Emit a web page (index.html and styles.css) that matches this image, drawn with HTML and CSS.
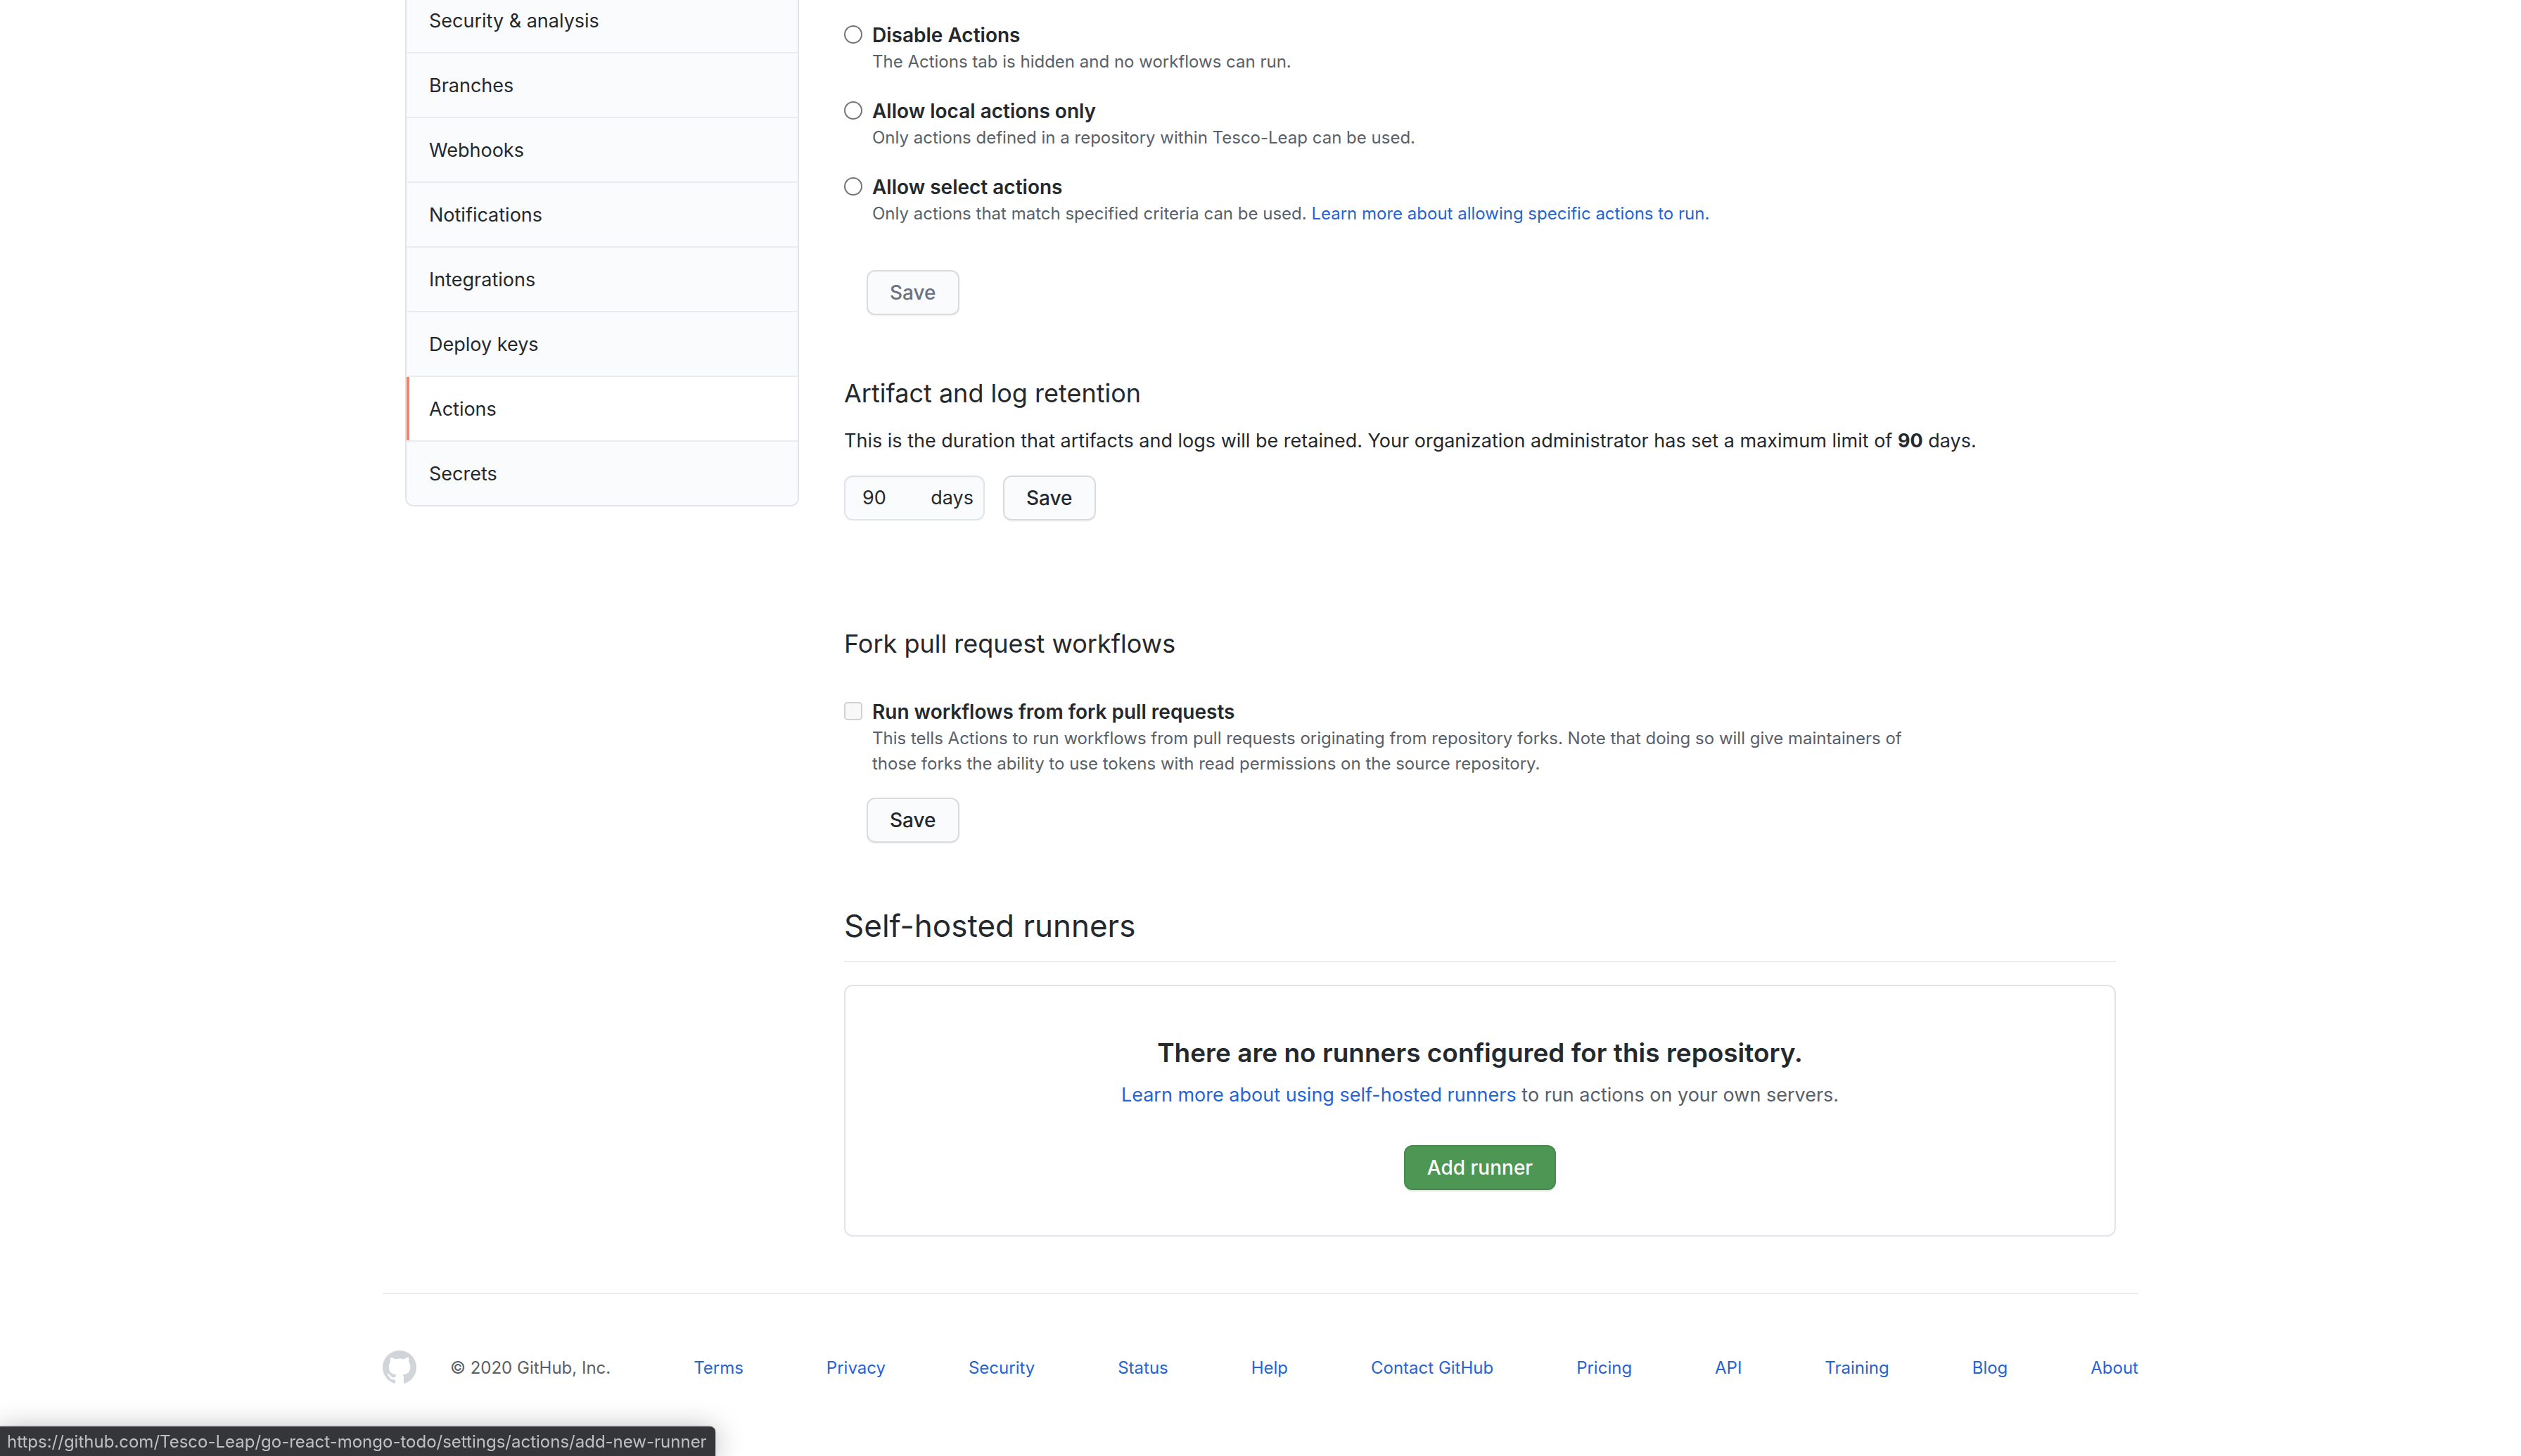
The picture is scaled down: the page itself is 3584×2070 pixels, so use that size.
FILE: index.html
```html
<!DOCTYPE html>
<html lang="en">
<head>
<meta charset="utf-8">
<title>Actions settings</title>
<link rel="stylesheet" href="styles.css">
</head>
<body>
<div class="layout">
  <nav class="menu" aria-label="Repository settings">
    <a class="menu-item" href="#security">Security &amp; analysis</a>
    <a class="menu-item" href="#branches">Branches</a>
    <a class="menu-item" href="#webhooks">Webhooks</a>
    <a class="menu-item" href="#notifications">Notifications</a>
    <a class="menu-item" href="#integrations">Integrations</a>
    <a class="menu-item" href="#keys">Deploy keys</a>
    <a class="menu-item selected" href="#actions" aria-current="page">Actions</a>
    <a class="menu-item" href="#secrets">Secrets</a>
  </nav>

  <main class="content">
    <form class="permissions">
      <div class="option">
        <input type="radio" name="policy" id="disable">
        <div>
          <label for="disable">Disable Actions</label>
          <p class="note">The Actions tab is hidden and no workflows can run.</p>
        </div>
      </div>
      <div class="option">
        <input type="radio" name="policy" id="local">
        <div>
          <label for="local">Allow local actions only</label>
          <p class="note">Only actions defined in a repository within Tesco-Leap can be used.</p>
        </div>
      </div>
      <div class="option">
        <input type="radio" name="policy" id="select">
        <div>
          <label for="select">Allow select actions</label>
          <p class="note">Only actions that match specified criteria can be used. <a href="#learn">Learn more about allowing specific actions to run.</a></p>
        </div>
      </div>
      <button class="btn indent" type="submit" disabled>Save</button>
    </form>

    <section class="retention">
      <h3>Artifact and log retention</h3>
      <p class="lead">This is the duration that artifacts and logs will be retained. Your organization administrator has set a maximum limit of <strong>90</strong> days.</p>
      <form class="retention-form">
        <div class="days-field">
          <input type="text" id="days" value="90">
          <label for="days">days</label>
        </div>
        <button class="btn" type="submit">Save</button>
      </form>
    </section>

    <section class="forks">
      <h3>Fork pull request workflows</h3>
      <form>
        <div class="option">
          <input type="checkbox" id="fork" disabled>
          <div>
            <label for="fork">Run workflows from fork pull requests</label>
            <p class="note">This tells Actions to run workflows from pull requests originating from repository forks. Note that doing so will give maintainers of those forks the ability to use tokens with read permissions on the source repository.</p>
          </div>
        </div>
        <button class="btn indent" type="submit">Save</button>
      </form>
    </section>

    <section class="runners">
      <h2>Self-hosted runners</h2>
      <div class="blankslate">
        <h3>There are no runners configured for this repository.</h3>
        <p><a href="#runners">Learn more about using self-hosted runners</a> to run actions on your own servers.</p>
        <button class="btn btn-primary" type="button">Add runner</button>
      </div>
    </section>
  </main>
</div>

<footer class="footer">
  <a class="mark" href="#home" aria-label="GitHub">
    <svg viewBox="0 0 16 16" width="48" height="48" aria-hidden="true"><path fill="currentColor" fill-rule="evenodd" d="M8 0C3.58 0 0 3.58 0 8c0 3.54 2.29 6.53 5.47 7.59.4.07.55-.17.55-.38 0-.19-.01-.82-.01-1.49-2.01.37-2.53-.49-2.69-.94-.09-.23-.48-.94-.82-1.13-.28-.15-.68-.52-.01-.53.63-.01 1.08.58 1.23.82.72 1.21 1.87.87 2.33.66.07-.52.28-.87.51-1.07-1.78-.2-3.64-.89-3.64-3.95 0-.87.31-1.59.82-2.15-.08-.2-.36-1.02.08-2.12 0 0 .67-.21 2.2.82.64-.18 1.32-.27 2-.27.68 0 1.36.09 2 .27 1.53-1.04 2.2-.82 2.2-.82.44 1.1.16 1.92.08 2.12.51.56.82 1.27.82 2.15 0 3.07-1.87 3.75-3.65 3.95.29.25.54.73.54 1.48 0 1.07-.01 1.93-.01 2.2 0 .21.15.46.55.38A8.013 8.013 0 0016 8c0-4.42-3.58-8-8-8z"/></svg>
  </a>
  <ul class="footer-links">
    <li>© 2020 GitHub, Inc.</li>
    <li><a href="#terms">Terms</a></li>
    <li><a href="#privacy">Privacy</a></li>
    <li><a href="#sec">Security</a></li>
    <li><a href="#status">Status</a></li>
    <li><a href="#help">Help</a></li>
    <li><a href="#contact">Contact GitHub</a></li>
    <li><a href="#pricing">Pricing</a></li>
    <li><a href="#api">API</a></li>
    <li><a href="#training">Training</a></li>
    <li><a href="#blog">Blog</a></li>
    <li><a href="#about">About</a></li>
  </ul>
</footer>

<div class="status-bubble">https://github.com/Tesco-Leap/go-react-mongo-todo/settings/actions/add-new-runner</div>
</body>
</html>
```

FILE: styles.css
```css
:root {
  --text: #24292e;
  --muted: #586069;
  --link: #2563d6;
  --line: #e1e4e8;
  --line-soft: #eaecef;
  --surface: #fafbfd;
  --body: 27px;
  --strong: 28px;
  --small: 24px;
}

* { box-sizing: border-box; }

body {
  margin: 0;
  background: #fff;
  color: var(--text);
  font-family: Inter, "Liberation Sans", sans-serif;
  font-size: var(--body);
  line-height: 42px;
}

h2, h3, p, ul { margin: 0; padding: 0; }
h2, h3 { font-weight: 400; }
a { color: var(--link); text-decoration: none; }

.layout {
  display: flex;
  align-items: flex-start;
  gap: 64px;
  max-width: 2560px;
  margin: 0 auto;
  padding: 0 64px;
}

/* The menu continues above the top edge of the window. */
.menu {
  flex: none;
  width: 560px;
  margin-top: -16px;
  border: 2px solid var(--line);
  border-top: 0;
  border-radius: 0 0 12px 12px;
  overflow: hidden;
}

.menu-item {
  display: block;
  padding: 25px 32px 23px;
  border-bottom: 2px solid var(--line-soft);
  background: var(--surface);
  color: var(--text);
}
.menu-item:last-child { border-bottom: 0; }
.menu-item.selected {
  background: #fff;
  box-shadow: inset 4px 0 #ea8770;
}

.content { flex: 1; min-width: 0; padding-top: 30px; }

.option {
  display: flex;
  gap: 14px;
  max-width: 1560px;
}
.permissions .option { margin-bottom: 32px; }

.option label {
  display: block;
  font-size: var(--strong);
  font-weight: 600;
  line-height: 40px;
}

.option input {
  appearance: none;
  flex: none;
  width: 26px;
  height: 26px;
  margin: 6px 0 0;
  border: 2px solid #767676;
  border-radius: 50%;
  background: #fff;
}
.option input[type="checkbox"] {
  border-color: #d1d1d1;
  border-radius: 5px;
  background: #f8f8f8;
}

.note {
  color: var(--muted);
  font-size: var(--small);
  line-height: 36px;
}

.btn {
  display: block;
  height: 64px;
  padding: 0 31px;
  border: 2px solid #d9dbdd;
  border-radius: 12px;
  background: var(--surface);
  box-shadow: 0 2px 0 rgba(27, 31, 35, .04);
  color: var(--text);
  font: 500 var(--strong)/40px Inter, "Liberation Sans", sans-serif;
}
.btn:disabled { color: #6a737d; }
.indent { margin-left: 32px; }
.permissions .indent { margin-top: 62px; }

.content h3 { font-size: 36px; line-height: 62px; }

.retention { margin-top: 80px; }
.lead { margin-top: 16px; }

.retention-form { display: flex; gap: 26px; margin-top: 28px; }

.days-field {
  display: flex;
  align-items: center;
  width: 200px;
  height: 64px;
  padding: 0 14px 0 24px;
  border: 2px solid var(--line);
  border-radius: 12px;
  background: var(--surface);
  box-shadow: inset 0 2px 0 rgba(225, 228, 232, .2);
}
.days-field input {
  flex: 1;
  min-width: 0;
  padding: 0;
  border: 0;
  background: none;
  color: inherit;
  font: inherit;
}

.forks { margin-top: 144px; }
.forks .option { margin-top: 46px; }
.forks .indent { margin-top: 30px; }

.runners { margin-top: 80px; }
.runners h2 {
  padding-bottom: 12px;
  border-bottom: 2px solid var(--line-soft);
  font-size: 44px;
  line-height: 76px;
}

.blankslate {
  margin-top: 32px;
  padding: 64px;
  border: 2px solid var(--line);
  border-radius: 12px;
  text-align: center;
  color: var(--muted);
}
.content .blankslate h3 {
  margin-bottom: 8px;
  color: var(--text);
  font-size: 37px;
  font-weight: 600;
}
.blankslate .btn { margin: 50px auto 0; }

.btn-primary {
  border-color: #478a4c;
  background: #4e9654;
  box-shadow: 0 2px 0 rgba(27, 31, 35, .1);
  color: #fff;
}

.footer {
  display: flex;
  align-items: center;
  gap: 48px;
  max-width: 2496px;
  margin: 80px auto 0;
  padding: 80px 0 48px;
  border-top: 2px solid var(--line-soft);
  color: var(--muted);
  font-size: var(--small);
  line-height: 36px;
}
.mark { display: flex; color: #d1d5da; }
.footer-links {
  display: flex;
  flex: 1;
  justify-content: space-between;
  padding-top: 2px;
  list-style: none;
}

.status-bubble {
  position: fixed;
  bottom: 0;
  left: 0;
  padding: 4px 12px 2px 10px;
  border-radius: 0 8px 0 0;
  background: #35363a;
  box-shadow: 0 0 2px rgba(0, 0, 0, .5), 0 4px 40px rgba(0, 0, 0, .3);
  color: #bdc1c6;
  font-size: var(--small);
  line-height: 36px;
}
```
